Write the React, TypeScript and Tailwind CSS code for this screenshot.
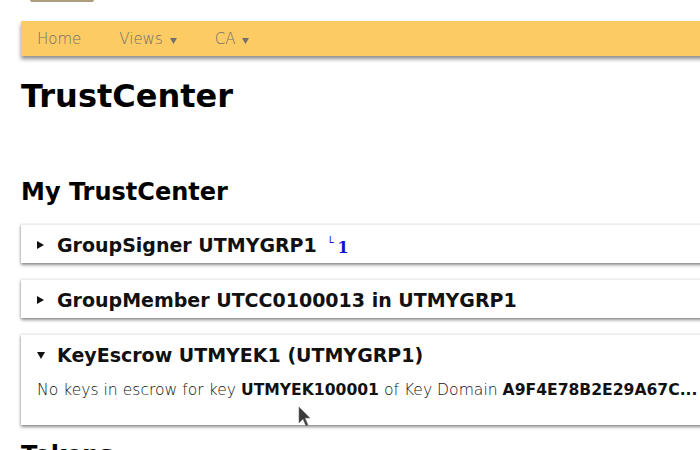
import React from "react";

function Caret() {
  return (
    <svg width="7" height="6" viewBox="0 0 7 6" className="ml-[7px] mt-[3px]">
      <path d="M0 0 L7 0 L3.5 6 Z" fill="#707070" />
    </svg>
  );
}

function Toggle({ open }: { open?: boolean }) {
  return open ? (
    <svg width="8" height="7" viewBox="0 0 8 7" className="shrink-0">
      <path d="M0 0 L8 0 L4 7 Z" fill="#111" />
    </svg>
  ) : (
    <svg width="7" height="8" viewBox="0 0 7 8" className="shrink-0">
      <path d="M0 0 L7 4 L0 8 Z" fill="#111" />
    </svg>
  );
}

function Card({
  title,
  open,
  extra,
  children,
}: {
  title: string;
  open?: boolean;
  extra?: React.ReactNode;
  children?: React.ReactNode;
}) {
  return (
    <div className="bg-white border-t border-[#ececec] shadow-[0_2px_3px_rgba(0,0,0,0.45),-1px_0_2px_rgba(0,0,0,0.08)] pl-[16px] pt-[9px] pb-[7px]">
      <div className="flex items-center h-[22px] whitespace-nowrap">
        <div className="w-[20px] flex">
          <Toggle open={open} />
        </div>
        <span className="text-[19px] font-bold text-[#111] leading-[22px]">{title}</span>
        {extra}
      </div>
      {children}
    </div>
  );
}

export default function App() {
  return (
    <div
      className="relative w-[700px] h-[450px] overflow-hidden bg-white"
      style={{ fontFamily: '"DejaVu Sans", Verdana, sans-serif' }}
    >
      <div className="ml-[30px] w-[64px] h-[2px] rounded-b bg-[#ab9d7e]" />
      <div className="ml-[21px] w-[720px]">
        <nav className="mt-[19px] h-[35px] bg-[#fdcb64] shadow-[0_3px_4px_rgba(0,0,0,0.45)] flex items-center pl-[16px] gap-[38px] text-[15px] font-extralight text-[#6e6e6e]">
          <span className="mt-[1px]">Home</span>
          <span className="flex items-center mt-[1px]">
            Views
            <Caret />
          </span>
          <span className="flex items-center mt-[1px]">
            CA
            <Caret />
          </span>
        </nav>

        <h1 className="mt-[21px] text-[32px] leading-[38px] font-bold text-black">TrustCenter</h1>

        <h2 className="mt-[63px] text-[24px] leading-[29px] font-bold text-black">My TrustCenter</h2>

        <div className="mt-[17px] flex flex-col gap-[16px]">
          <Card
            title="GroupSigner UTMYGRP1"
            extra={
              <span className="ml-[10px] flex items-start text-[#1010d0] h-[22px]">
                <span className="text-[11px] leading-[11px] mt-[3px]">└</span>
                <span
                  className="ml-[4px] text-[16px] leading-[16px] mt-[6px] font-bold"
                  style={{ fontFamily: '"DejaVu Serif", serif' }}
                >
                  1
                </span>
              </span>
            }
          />
          <Card title="GroupMember UTCC0100013 in UTMYGRP1" />
          <Card title="KeyEscrow UTMYEK1 (UTMYGRP1)" open>
            <p className="mt-[12px] mb-[16px] text-[15.6px] leading-[24px] text-[#111] font-extralight whitespace-nowrap">
              No keys in escrow for key <b className="font-bold">UTMYEK100001</b> of Key Domain{" "}
              <b className="font-bold">A9F4E78B2E29A67C...</b>
            </p>
          </Card>
        </div>

        <h2 className="mt-[16px] text-[24px] leading-[29px] font-bold text-black">Tokens</h2>
      </div>

      <svg
        className="absolute left-[298px] top-[406px]"
        width="14"
        height="22"
        viewBox="0 0 14 22"
      >
        <path d="M1 1 L1 17 L5 13 L8 20 L10 19 L7 12 L12 12 Z" fill="#3a3a3a" stroke="#777" strokeWidth="0.6" />
      </svg>
    </div>
  );
}
